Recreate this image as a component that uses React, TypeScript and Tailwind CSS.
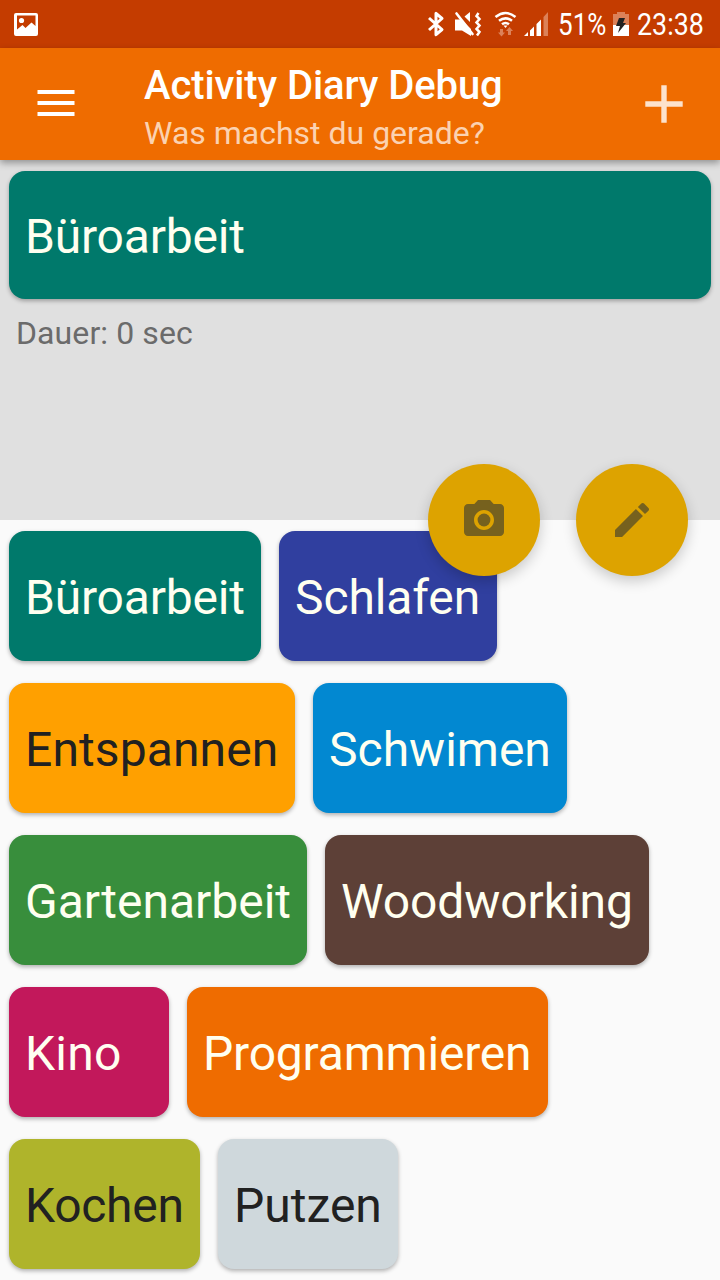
import type { ReactNode } from "react";

type Activity = { name: string; look: string };

const rows: Activity[][] = [
  [
    { name: "Büroarbeit", look: "w-[252px] bg-[#00796b] text-[#fffff0] tracking-[-0.2px]" },
    { name: "Schlafen", look: "w-[218px] bg-[#303f9f] text-[#fffff0] tracking-[-0.1px]" },
  ],
  [
    { name: "Entspannen", look: "w-[286px] bg-[#ffa000] text-[#212121] tracking-[0.1px]" },
    { name: "Schwimen", look: "w-[254px] bg-[#0288d1] text-[#fffff0]" },
  ],
  [
    { name: "Gartenarbeit", look: "w-[298px] bg-[#388e3c] text-[#fffff0]" },
    { name: "Woodworking", look: "w-[324px] bg-[#5d4037] text-[#fffff0] tracking-[-0.1px]" },
  ],
  [
    { name: "Kino", look: "w-[160px] bg-[#c2185b] text-[#fffff0] tracking-[0.2px]" },
    { name: "Programmieren", look: "w-[361px] bg-[#ef6c00] text-[#fffff0] tracking-[-0.2px]" },
  ],
  [
    { name: "Kochen", look: "w-[191px] bg-[#afb42b] text-[#212121] tracking-[-0.3px]" },
    { name: "Putzen", look: "w-[180px] bg-[#cfd8dc] text-[#212121]" },
  ],
];

function Card({ name, look }: Activity) {
  return (
    <div
      className={`flex h-[130px] items-center rounded-[16px] pl-4 pt-1 text-[48px] leading-[56px] whitespace-nowrap shadow-[0_2px_4px_rgba(0,0,0,0.3)] ${look}`}
    >
      {name}
    </div>
  );
}

function Fab({ children }: { children: ReactNode }) {
  return (
    <button className="flex size-[112px] items-center justify-center rounded-full bg-[#dda300] shadow-[0_5px_14px_rgba(0,0,0,0.2)]">
      {children}
    </button>
  );
}

function StatusBar() {
  return (
    <div className="flex h-12 items-center bg-[#c43c00] text-white">
      <svg className="ml-[14px] h-[23px] w-6" viewBox="0 0 24 23">
        <path
          fillRule="evenodd"
          fill="#fff"
          d="M2 0h20a2 2 0 0 1 2 2v19a2 2 0 0 1-2 2H2a2 2 0 0 1-2-2V2a2 2 0 0 1 2-2zM3 2.500V16.500L8.500 12l3 3L17.500 9.500 21.500 13V2.500z"
        />
        <circle cx="7.500" cy="7.500" r="2.600" fill="#fff" />
      </svg>
      <svg className="ml-[382px] h-12 w-[130px]" viewBox="420 0 130 48">
        <path d="M429 18l13 11.500-6 5.200V13.300l6 5.200-13 11.500" fill="none" stroke="#fff" strokeWidth="3" strokeLinejoin="round" />
        <path d="M455 19.500h6L471 29v7L462 30.500h-7zM464.500 16.500l5.500-4.500v10z" fill="#fff" />
        <path d="M456.500 13.500l16 20.500" stroke="#fff" strokeWidth="2.600" strokeLinecap="round" />
        <path d="M478.500 13l-2 3 3 3-3 3.500 3 3-3 3.500 3 3-2.500 3.500" fill="none" stroke="#fff" strokeWidth="2.500" />
        <g fill="none" stroke="#fff" strokeWidth="2.600">
          <path d="M495.500 17q10-8 20 0M499 20.800q6.500-5 13 0M502 24.300q3.500-2.600 7 0" />
        </g>
        <path d="M503.500 25.500h4l-2 2.500z" fill="#fff" />
        <path d="M500 29h3v3.500h2L501.500 36.500 498 32.500h2zM508 35h3v-4h2l-3.500-4-3.500 4h2z" fill="#dc8158" />
        <path d="M524 36l4-4v4zM530 30.500l4-4V36h-4zM536.500 24l4.500-4.500V36h-4.500z" fill="#fff" />
        <path d="M543.500 17l4.500-5v24h-4.500z" fill="#dc8158" />
      </svg>
      <span className="mt-[2px] ml-[8px] w-[48px] origin-left scale-x-[0.84] text-[31px] leading-[36px]">51%</span>
      <svg className="ml-[7px] h-6 w-4" viewBox="0 0 16 24">
        <path d="M0 2h4V0h8v2h4v11H0z" fill="#dc8158" />
        <path d="M0 13h16v11H0z" fill="#fff" />
        <path d="M6 6h6l-2 5h3L5 21l2-7H3z" fill="#222" />
      </svg>
      <span className="mt-[2px] ml-[8px] origin-left scale-x-[0.865] text-[31px] leading-[36px]">23:38</span>
    </div>
  );
}

export default function App() {
  return (
    <div className="flex h-[1280px] w-[720px] flex-col overflow-hidden bg-[#fafafa] font-['Roboto',sans-serif]">
      <StatusBar />
      <header className="z-10 flex h-28 shrink-0 bg-[#ef6c00] shadow-[0_3px_7px_rgba(0,0,0,0.35)]">
        <svg className="mt-[42px] ml-[37px] h-[26px] w-[38px] shrink-0" viewBox="0 0 38 26">
          <path d="M0.500 0h37v4h-37zM0.500 11h37v4h-37zM0.500 22h37v4h-37z" fill="#fff" />
        </svg>
        <div className="ml-[69px] flex w-[501px] flex-col pt-[14px] whitespace-nowrap">
          <h1 className="text-[40px] leading-[47px] font-medium tracking-[-0.1px] text-white">Activity Diary Debug</h1>
          <p className="mt-[5px] text-[32px] leading-[38px] text-[#fbd2b1]">Was machst du gerade?</p>
        </div>
        <svg className="mt-[37px] size-[38px] shrink-0" viewBox="0 0 38 38">
          <path d="M16.300 0.300h5.400v16h16v5.400h-16v16h-5.400v-16h-16v-5.400h16z" fill="#fde2cc" />
        </svg>
      </header>

      <section className="relative h-[360px] shrink-0 bg-[#e0e0e0] px-[9px] pt-[11px]">
        <div className="flex h-32 items-center rounded-[16px] bg-[#00796b] pt-1 pl-4 text-[48px] leading-[56px] tracking-[-0.2px] text-[#fffff0] shadow-[0_2px_4px_rgba(0,0,0,0.3)]">
          Büroarbeit
        </div>
        <p className="mt-[15px] ml-[7px] text-[32px] leading-[38px] tracking-[0.1px] text-[#6b6b6b]">Dauer: 0 sec</p>
        <div className="absolute right-8 -bottom-14 z-10 flex gap-9">
          <Fab>
            <svg className="size-12" viewBox="0 0 24 24" fill="#76611e">
              <circle cx="12" cy="12" r="3.200" />
              <path d="M9 2L7.170 4H4c-1.100 0-2 .9-2 2v12c0 1.100.9 2 2 2h16c1.100 0 2-.9 2-2V6c0-1.100-.9-2-2-2h-3.170L15 2H9zm3 15c-2.760 0-5-2.240-5-5s2.240-5 5-5 5 2.240 5 5-2.240 5-5 5z" />
            </svg>
          </Fab>
          <Fab>
            <svg className="h-[34px] w-[34px]" viewBox="3 3 18 18" fill="#76611e">
              <path d="M3 17.250V21h3.750L17.810 9.940l-3.750-3.750L3 17.250zM20.710 7.040c.39-.39.39-1.020 0-1.410l-2.340-2.340c-.39-.39-1.020-.39-1.410 0l-1.830 1.830 3.750 3.750 1.830-1.830z" />
            </svg>
          </Fab>
        </div>
      </section>

      <main className="flex flex-col gap-[22px] pt-[11px] pl-[9px]">
        {rows.map((row) => (
          <div key={row[0].name} className="flex gap-[18px]">
            {row.map((a) => (
              <Card key={a.name} name={a.name} look={a.look} />
            ))}
          </div>
        ))}
      </main>
    </div>
  );
}
